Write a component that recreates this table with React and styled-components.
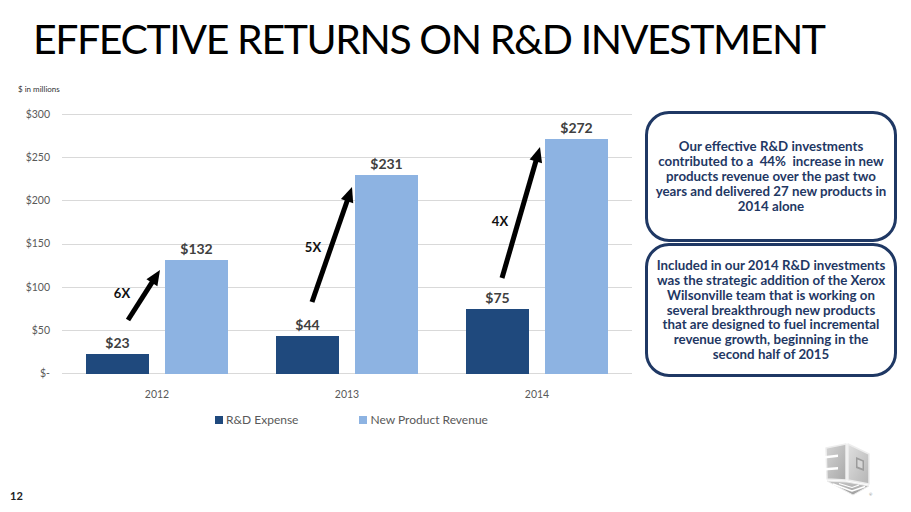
import React from "react";
import styled, { createGlobalStyle } from "styled-components";

const Global = createGlobalStyle`
  html, body { margin: 0; padding: 0; background: #fff; }
  body { font-family: Lato, "Open Sans", sans-serif; }
`;

const SCALE = 259 / 300;
const DARK = "#1f497d";
const LIGHT = "#8db3e2";

const data = [
  { year: "2012", rd: 23, npr: 132 },
  { year: "2013", rd: 44, npr: 231 },
  { year: "2014", rd: 75, npr: 272 },
];

const arrows = [
  { t: [128, 320], p: [160, 270], label: "6X", lx: 122, ly: 293 },
  { t: [312, 302], p: [352, 187], label: "5X", lx: 313, ly: 247 },
  { t: [502, 278], p: [540, 147], label: "4X", lx: 500, ly: 221 },
];

const Page = styled.div`
  width: 911px;
  height: 512px;
  display: flex;
  flex-direction: column;
  overflow: hidden;
  font-family: Lato, "Open Sans", sans-serif;
`;

const Title = styled.h1`
  margin: 0;
  height: 80px;
  box-sizing: border-box;
  padding: 13px 0 0 33px;
  font-family: Lato, "Open Sans", sans-serif;
  font-weight: 400;
  font-size: 41px;
  letter-spacing: -1.4px;
  line-height: 52px;
  color: #000;
  white-space: nowrap;
`;

const Main = styled.div`
  display: flex;
  align-items: flex-start;
`;

const ChartCol = styled.div`
  position: relative;
  width: 645px;
  flex: none;
`;

const Units = styled.div`
  margin: 4px 0 0 18px;
  font-size: 8px;
  line-height: 10px;
  color: #333;
`;

const PlotRow = styled.div`
  display: flex;
  align-items: flex-start;
  margin-top: 14px;
`;

const YAxis = styled.div`
  width: 50px;
  height: 271px;
  display: flex;
  flex-direction: column;
  justify-content: space-between;
  text-align: right;
  font-size: 10.5px;
  line-height: 12px;
  color: #595959;
`;

const Plot = styled.div`
  margin: 6px 0 0 12px;
  width: 570px;
  height: 260px;
  background: repeating-linear-gradient(
    to bottom,
    #d9d9d9 0,
    #d9d9d9 1px,
    transparent 1px,
    transparent 43.1667px
  );
  display: grid;
  grid-template-columns: repeat(3, 1fr);
`;

const Category = styled.div`
  display: flex;
  align-items: flex-end;
  gap: 16px;
  padding: 0 24px;
`;

const BarCol = styled.div`
  width: 63px;
  display: flex;
  flex-direction: column;
  align-items: center;
`;

const ValueLabel = styled.div`
  font-weight: 700;
  font-size: 14px;
  line-height: 16px;
  margin-bottom: 3px;
  color: #404040;
`;

const Bar = styled.div`
  width: 100%;
  background: ${(p) => p.$color};
`;

const XAxis = styled.div`
  display: grid;
  grid-template-columns: repeat(3, 1fr);
  margin: 8px 0 0 62px;
  width: 570px;
  text-align: center;
  font-size: 10.5px;
  line-height: 14px;
  color: #595959;
`;

const Legend = styled.div`
  display: flex;
  margin: 12px 0 0 215px;
  gap: 61px;
  font-size: 12px;
  line-height: 14px;
  color: #595959;
`;

const LegendItem = styled.div`
  display: flex;
  align-items: center;
  gap: 3px;
`;

const Swatch = styled.span`
  width: 8px;
  height: 8px;
  background: ${(p) => p.$color};
`;

const ArrowLayer = styled.svg`
  position: absolute;
  left: 0;
  top: 0;
  pointer-events: none;
`;

const ArrowLabel = styled.span`
  position: absolute;
  left: ${(p) => p.$x}px;
  top: ${(p) => p.$y}px;
  transform: translate(-50%, -50%);
  font-weight: 700;
  font-size: 13px;
  line-height: 16px;
  color: #111;
`;

const BoxCol = styled.div`
  width: 252px;
  margin-top: 31px;
  display: flex;
  flex-direction: column;
  gap: 1px;
`;

const Callout = styled.div`
  box-sizing: border-box;
  height: ${(p) => p.$h}px;
  border: 3px solid #1f3864;
  border-radius: 24px;
  display: flex;
  align-items: center;
  justify-content: center;
  text-align: center;
  padding: 0 4px;
  font-weight: 700;
  font-size: 13.3px;
  line-height: 14.9px;
  color: #1f3864;
  white-space: nowrap;
`;

const Footer = styled.div`
  margin-top: auto;
  display: flex;
  justify-content: space-between;
  align-items: flex-end;
  padding: 0 38px 15px 10px;
`;

const PageNum = styled.div`
  font-size: 11px;
  font-weight: 700;
  line-height: 12px;
  color: #222;
  margin-bottom: -5px;
`;

function Arrow({ t, p }) {
  const oy = 80;
  const [tx, ty] = [t[0], t[1] - oy];
  const [px, py] = [p[0], p[1] - oy];
  const dx = px - tx, dy = py - ty;
  const len = Math.hypot(dx, dy);
  const ux = dx / len, uy = dy / len;
  const nx = -uy, ny = ux;
  const hl = 15, hw = 6.5;
  const bx = px - ux * hl, by = py - uy * hl;
  return (
    <g>
      <line x1={tx} y1={ty} x2={bx + ux * 2} y2={by + uy * 2} stroke="#000" strokeWidth="5" />
      <polygon
        points={`${px},${py} ${bx + nx * hw},${by + ny * hw} ${bx - nx * hw},${by - ny * hw}`}
        fill="#000"
      />
    </g>
  );
}

function Logo() {
  return (
    <svg width="48" height="55" viewBox="0 0 48 55">
      <defs>
        <linearGradient id="lf" x1="0" y1="0" x2="1" y2="1">
          <stop offset="0" stopColor="#d4d4d4" />
          <stop offset="1" stopColor="#a9a9a9" />
        </linearGradient>
        <linearGradient id="rf" x1="0" y1="0" x2="1" y2="1">
          <stop offset="0" stopColor="#e0e0e0" />
          <stop offset="1" stopColor="#b5b5b5" />
        </linearGradient>
        <linearGradient id="bf" x1="0" y1="0" x2="0" y2="1">
          <stop offset="0" stopColor="#c4c4c4" />
          <stop offset="1" stopColor="#9f9f9f" />
        </linearGradient>
      </defs>
      <g strokeLinejoin="round">
        <polygon points="1,6 21,2 21,38 2,37" fill="url(#lf)" stroke="#ededed" strokeWidth="1.5" />
        <polygon points="0,14 13,12.5 13,15 0,16.5" fill="#fff" />
        <polygon points="0,26 13,25 13,27.5 0,28.5" fill="#fff" />
        <polygon points="23,2 44,12 44,42 23,38" fill="url(#rf)" stroke="#ededed" strokeWidth="1.5" />
        <polygon points="31,15 39,18.5 39,29 31,26" fill="#9c9c9c" />
        <polygon points="32.5,17.5 37.5,19.5 37.5,26.5 32.5,24.5" fill="#d6d6d6" />
        <polygon points="2,39 22,40 44,44 28,53" fill="url(#bf)" stroke="#ededed" strokeWidth="1" />
        <polyline points="8,42 27,49 40,44.5" fill="none" stroke="#fff" strokeWidth="1.4" />
        <polyline points="14,41.5 27,45.5 34,43" fill="none" stroke="#fff" strokeWidth="1.1" />
      </g>
      <text x="44" y="54" fontSize="4" fill="#777" fontFamily="Lato, sans-serif">®</text>
    </svg>
  );
}

export default function App() {
  return (
    <Page>
      <Global />
      <Title>EFFECTIVE RETURNS ON R&amp;D INVESTMENT</Title>
      <Main>
        <ChartCol>
          <Units>$ in millions</Units>
          <PlotRow>
            <YAxis>
              {["$300", "$250", "$200", "$150", "$100", "$50", "$-"].map((l) => (
                <div key={l}>{l}</div>
              ))}
            </YAxis>
            <Plot>
              {data.map((d) => (
                <Category key={d.year}>
                  <BarCol>
                    <ValueLabel>${d.rd}</ValueLabel>
                    <Bar $color={DARK} style={{ height: d.rd * SCALE }} />
                  </BarCol>
                  <BarCol>
                    <ValueLabel>${d.npr}</ValueLabel>
                    <Bar $color={LIGHT} style={{ height: d.npr * SCALE }} />
                  </BarCol>
                </Category>
              ))}
            </Plot>
          </PlotRow>
          <XAxis>
            {data.map((d) => (
              <div key={d.year}>{d.year}</div>
            ))}
          </XAxis>
          <Legend>
            <LegendItem>
              <Swatch $color={DARK} />
              R&amp;D Expense
            </LegendItem>
            <LegendItem>
              <Swatch $color={LIGHT} />
              New Product Revenue
            </LegendItem>
          </Legend>
          <ArrowLayer width="645" height="360">
            {arrows.map((a) => (
              <Arrow key={a.label} t={a.t} p={a.p} />
            ))}
          </ArrowLayer>
          {arrows.map((a) => (
            <ArrowLabel key={a.label} $x={a.lx} $y={a.ly - 80}>
              {a.label}
            </ArrowLabel>
          ))}
        </ChartCol>
        <BoxCol>
          <Callout $h={131}>
            <div>
              Our effective R&amp;D investments
              <br />
              contributed to a&nbsp; 44%&nbsp; increase in new
              <br />
              products revenue over the past two
              <br />
              years and delivered 27 new products in
              <br />
              2014 alone
            </div>
          </Callout>
          <Callout $h={134}>
            <div>
              Included in our 2014 R&amp;D investments
              <br />
              was the strategic addition of the Xerox
              <br />
              Wilsonville team that is working on
              <br />
              several breakthrough new products
              <br />
              that are designed to fuel incremental
              <br />
              revenue growth, beginning in the
              <br />
              second half of 2015
            </div>
          </Callout>
        </BoxCol>
      </Main>
      <Footer>
        <PageNum>12</PageNum>
        <Logo />
      </Footer>
    </Page>
  );
}
